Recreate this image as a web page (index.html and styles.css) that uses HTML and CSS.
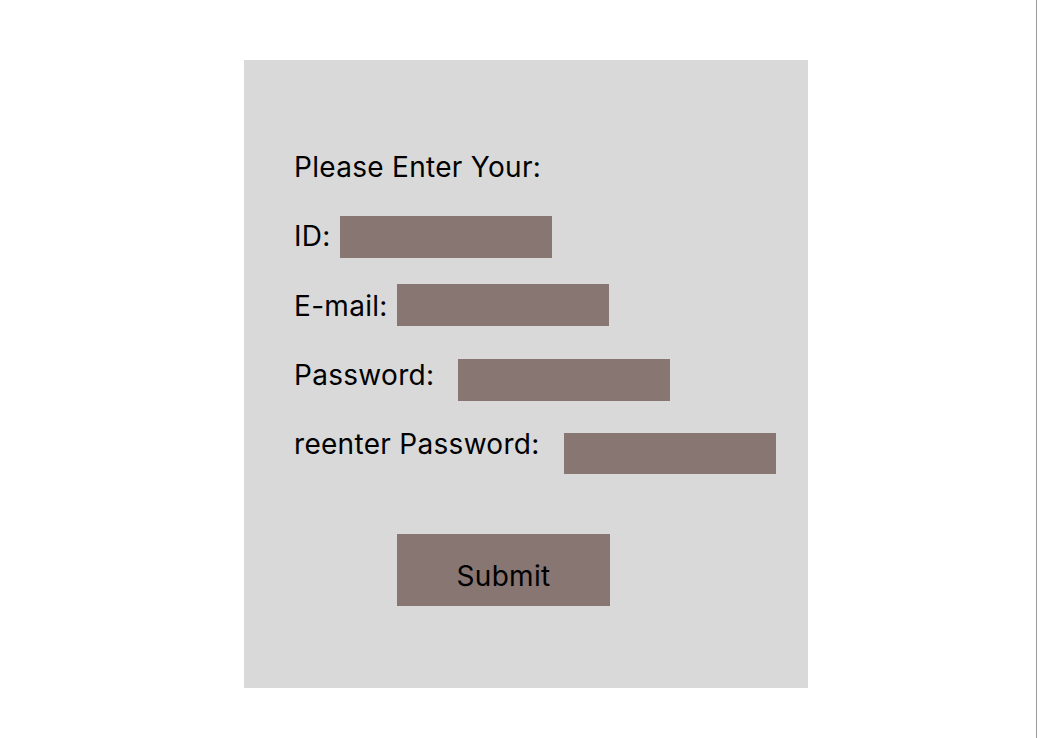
FILE: index.html
```html
<!DOCTYPE html>
<html lang="en">
<head>
<meta charset="utf-8">
<title>Register</title>
<link rel="stylesheet" href="styles.css">
</head>
<body>
<div class="page">
  <form class="panel">
    <div class="title">Please Enter Your:</div>
    <div class="row row-id">
      <label class="label">ID:</label>
      <span class="field"></span>
    </div>
    <div class="row row-email">
      <label class="label">E-mail:</label>
      <span class="field"></span>
    </div>
    <div class="row row-pass">
      <label class="label">Password:</label>
      <span class="field"></span>
    </div>
    <div class="row row-repass">
      <label class="label">reenter Password:</label>
      <span class="field"></span>
    </div>
    <button type="button" class="submit">Submit</button>
  </form>
</div>
</body>
</html>
```
FILE: styles.css
```css
html, body {
  margin: 0;
  padding: 0;
  background: #ffffff;
}
body {
  font-family: Inter, "Liberation Sans", sans-serif;
  color: #000;
}
.page {
  width: 1037px;
  height: 738px;
  border-right: 1px solid #9a9a9a;
  padding-top: 60px;
  box-sizing: border-box;
}
.panel {
  margin-left: 244px;
  width: 564px;
  height: 628px;
  background: #d9d9d9;
  box-sizing: border-box;
  padding: 90px 0 0 50px;
  display: flex;
  flex-direction: column;
  align-items: flex-start;
}
.title, .label {
  font-size: 28px;
  line-height: 34px;
  letter-spacing: 0.3px;
  white-space: nowrap;
}
.row {
  display: flex;
  align-items: flex-start;
}
.field {
  display: block;
  width: 212px;
  height: 42px;
  background: #887673;
}
.row-id { margin-top: 32px; gap: 9px; }
.row-id .label { margin-top: 3px; }
.row-email { margin-top: 26px; gap: 9px; }
.row-email .label { margin-top: 5px; }
.row-pass { margin-top: 32px; gap: 24px; }
.row-pass .field { margin-top: 1px; }
.row-repass { margin-top: 26px; gap: 24px; }
.row-repass .field { margin-top: 6px; height: 41px; }
.submit {
  margin-top: 60px;
  margin-left: 103px;
  width: 213px;
  height: 72px;
  background: #887673;
  border: none;
  padding: 12px 0 0 0;
  font-family: Inter, "Liberation Sans", sans-serif;
  font-size: 28px;
  letter-spacing: 0.3px;
  color: #000;
}
```
